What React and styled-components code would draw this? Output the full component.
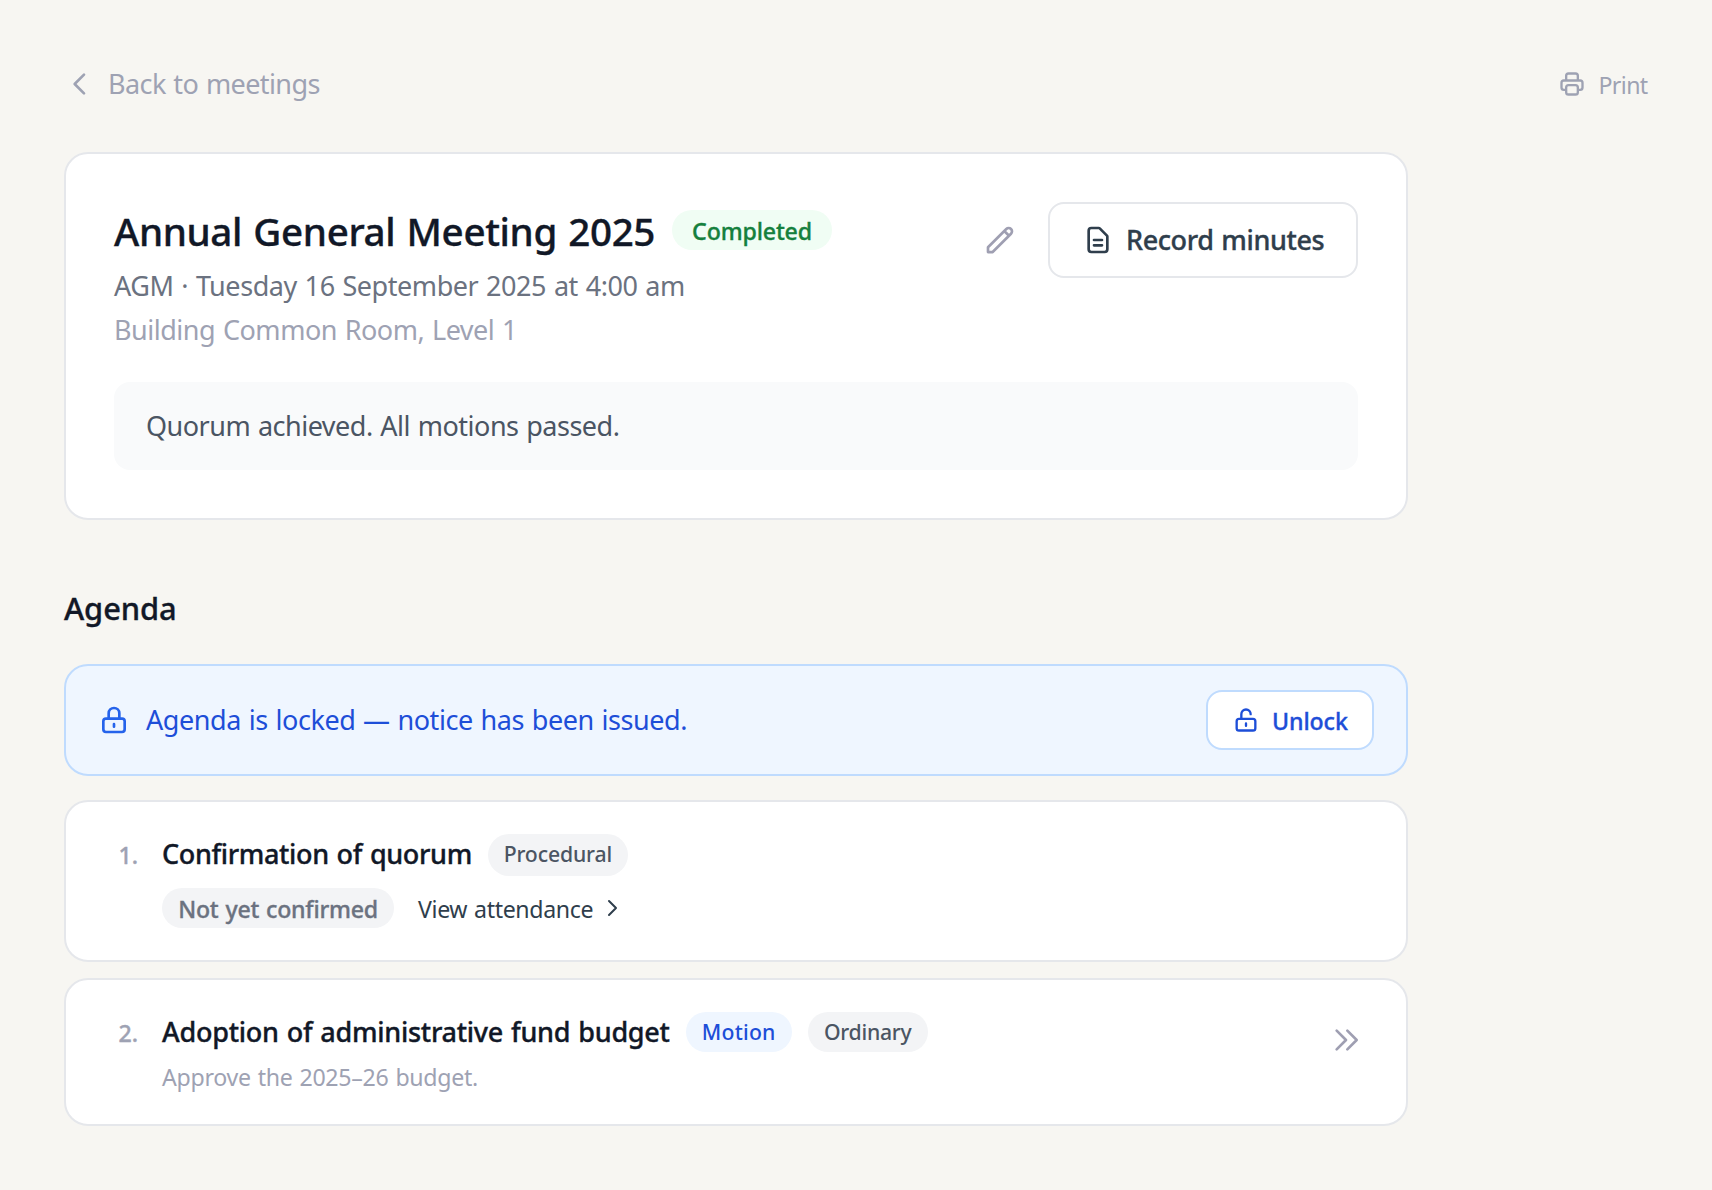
import React from "react";
import styled, { createGlobalStyle, css } from "styled-components";

const GlobalStyle = createGlobalStyle`
  *,
  *::before,
  *::after {
    box-sizing: border-box;
  }

  body {
    margin: 0;
    background: #f7f6f2;
    color: #111827;
    font-family: "Noto Sans", "Open Sans", sans-serif;
    font-size: 27px;
    line-height: 40px;
    word-spacing: 1.2px;
  }

  button {
    font: inherit;
    word-spacing: inherit;
    cursor: pointer;
  }

  h1,
  h2,
  h3,
  p {
    margin: 0;
  }
`;

// medium weight with a hairline stroke, sits between 500 and 600
const semibold = css`
  font-weight: 500;
  -webkit-text-stroke: 0.35px currentColor;
`;

const Page = styled.main`
  min-height: 1190px;
  padding: 64px;
`;

const TopBar = styled.header`
  display: flex;
  align-items: center;
  justify-content: space-between;
  height: 40px;
  margin-bottom: 48px;
`;

const Icon = styled.svg`
  flex: none;
  width: ${(props) => props.$size}px;
  height: ${(props) => props.$size}px;
  fill: none;
  stroke: currentColor;
  stroke-width: 2;
  stroke-linecap: round;
  stroke-linejoin: round;
`;

const BackLink = styled.a`
  display: flex;
  align-items: center;
  gap: 12px;
  color: #9ea2b3;
  letter-spacing: -0.59px;
  white-space: nowrap;
`;

const PrintButton = styled.button`
  display: flex;
  align-items: center;
  gap: 12px;
  padding: 0;
  border: 0;
  background: none;
  color: #9ea2b3;
`;

const Small = styled.span`
  padding-top: 2px;
  font-size: 23.16px;
  line-height: 30px;
  letter-spacing: ${(props) => props.$track || 0}px;
  white-space: nowrap;
  ${(props) => props.$bold && semibold}
`;

const PrintLabel = styled(Small)`
  width: 50px;
`;

const Content = styled.div`
  width: 1344px;
`;

const Card = styled.section`
  border: 2px solid #e5e7eb;
  border-radius: 24px;
  background: #fff;
`;

const MeetingCard = styled(Card)`
  padding: 48px;
`;

const MeetingHeader = styled.div`
  display: flex;
  align-items: flex-start;
  justify-content: space-between;
`;

const TitleRow = styled.div`
  display: flex;
  align-items: center;
  gap: 17px;
`;

const Title = styled.h1`
  padding-top: 2px;
  font-size: 38.6px;
  line-height: 54px;
  letter-spacing: -0.37px;
  word-spacing: 1.6px;
  ${semibold}
`;

const MeetingDate = styled.p`
  margin-top: 8px;
  color: #6b7280;
  letter-spacing: -0.44px;
`;

const Location = styled.p`
  margin-top: 4px;
  color: #9ea2b3;
  letter-spacing: -0.48px;
`;

const Actions = styled.div`
  display: flex;
  align-items: center;
  gap: 16px;
`;

const IconButton = styled.button`
  display: flex;
  padding: ${(props) => props.$pad}px;
  border: 0;
  background: none;
  color: #9f9fb2;
`;

const RecordButton = styled.button`
  display: flex;
  align-items: center;
  gap: 12px;
  width: 310px;
  height: 76px;
  padding: 0 32px;
  border: 2px solid #e5e7eb;
  border-radius: 16px;
  background: #fff;
  color: #2f3e4c;
  letter-spacing: -0.4px;
  white-space: nowrap;
`;

const RecordLabel = styled.span`
  ${semibold}
`;

const Notes = styled.p`
  margin-top: 32px;
  padding: 24px 32px;
  border-radius: 16px;
  background: #f9fafb;
  color: #4b5563;
  letter-spacing: -0.5px;
`;

const pillTones = {
  green: ["#f0fdf4", "#15803d"],
  blue: ["#eff6ff", "#1d4ed8"],
  gray: ["#f3f4f6", "#4b5563"],
  muted: ["#f3f4f6", "#6b7280"]
};

const Pill = styled.span`
  display: flex;
  justify-content: center;
  width: ${(props) => props.$width}px;
  height: ${(props) => props.$height || 40}px;
  padding: 4px 0;
  border-radius: 21px;
  background: ${(props) => pillTones[props.$tone][0]};
  color: ${(props) => pillTones[props.$tone][1]};
`;

const Tag = styled.span`
  font-size: 21.23px;
  font-weight: 500;
  line-height: 32px;
  letter-spacing: ${(props) => props.$track}px;
  white-space: nowrap;
`;

const SectionTitle = styled.h2`
  margin: 64px 0 32px;
  font-size: 30.88px;
  line-height: 48px;
  letter-spacing: -0.12px;
  ${semibold}
`;

const LockBanner = styled.div`
  display: flex;
  align-items: center;
  gap: 16px;
  margin-bottom: 24px;
  padding: 24px 32px;
  border: 2px solid #bfdbfe;
  border-radius: 24px;
  background: #eff6ff;
  color: #2563eb;
`;

const BannerText = styled.p`
  flex: 1;
  color: #1d4ed8;
  letter-spacing: -0.44px;
`;

const UnlockButton = styled.button`
  display: flex;
  align-items: center;
  gap: 12px;
  width: 168px;
  height: 60px;
  padding: 0 24px;
  border: 2px solid #bfdbfe;
  border-radius: 16px;
  background: #fff;
  color: #1d4ed8;
`;

const AgendaList = styled.div`
  display: grid;
  gap: 16px;
`;

const AgendaItem = styled(Card)`
  display: grid;
  grid-template-columns: 40px 1fr auto;
  column-gap: 24px;
  align-items: start;
  padding: 32px;
`;

const ItemNumber = styled.span`
  padding-top: 6px;
  color: #9ea2b3;
  font-size: 23.16px;
  line-height: 30px;
  text-align: right;
  ${semibold}
`;

const ItemHeading = styled.div`
  display: flex;
  align-items: flex-start;
  gap: 16px;
`;

const ItemTitle = styled.h3`
  font-size: 27px;
  letter-spacing: ${(props) => props.$track}px;
  white-space: nowrap;
  ${semibold}
`;

const QuorumRow = styled.div`
  display: flex;
  align-items: center;
  gap: 24px;
  margin-top: 12px;
`;

const AttendanceLink = styled.a`
  display: flex;
  align-items: center;
  gap: 7px;
  color: #2f3e4c;
`;

const Description = styled.p`
  margin-top: 8px;
  padding-top: 2px;
  color: #9ea2b3;
  font-size: 23.16px;
  line-height: 30px;
  letter-spacing: -0.29px;
`;

const icons = {
  back: "M15 19l-7-7 7-7",
  next: "M9 5l7 7-7 7",
  skip: "M13 5l7 7-7 7M5 5l7 7-7 7",
  print:
    "M17 17h2a2 2 0 002-2v-4a2 2 0 00-2-2H5a2 2 0 00-2 2v4a2 2 0 002 2h2m2 4h6a2 2 0 002-2v-4a2 2 0 00-2-2H9a2 2 0 00-2 2v4a2 2 0 002 2zm8-12V5a2 2 0 00-2-2H9a2 2 0 00-2 2v4h10z",
  edit:
    "M15.232 5.232l3.536 3.536m-2.036-5.036a2.5 2.5 0 113.536 3.536L6.5 21.036H3v-3.572L16.732 3.732z",
  document:
    "M9 12h6m-6 4h6m2 5H7a2 2 0 01-2-2V5a2 2 0 012-2h5.586a1 1 0 01.707.293l5.414 5.414a1 1 0 01.293.707V19a2 2 0 01-2 2z",
  lock:
    "M12 15v2m-6 4h12a2 2 0 002-2v-6a2 2 0 00-2-2H6a2 2 0 00-2 2v6a2 2 0 002 2zm10-10V7a4 4 0 00-8 0v4h8z",
  unlock:
    "M8 11V7a4 4 0 018 0m-4 8v2m-6 4h12a2 2 0 002-2v-6a2 2 0 00-2-2H6a2 2 0 00-2 2v6a2 2 0 002 2z"
};

const Glyph = ({ name, size = 32 }) => (
  <Icon $size={size} viewBox="0 0 24 24" aria-hidden="true">
    <path d={icons[name]} />
  </Icon>
);

const App = () => {
  return (
    <Page>
      <GlobalStyle />
      <TopBar>
        <BackLink>
          <Glyph name="back" />
          Back to meetings
        </BackLink>
        <PrintButton>
          <Glyph name="print" size={28} />
          <PrintLabel $track={-0.6}>Print</PrintLabel>
        </PrintButton>
      </TopBar>

      <Content>
        <MeetingCard>
          <MeetingHeader>
            <div>
              <TitleRow>
                <Title>Annual General Meeting 2025</Title>
                <Pill $tone="green" $width={160}>
                  <Small $bold $track={-0.15}>
                    Completed
                  </Small>
                </Pill>
              </TitleRow>
              <MeetingDate>AGM · Tuesday 16 September 2025 at 4:00 am</MeetingDate>
              <Location>Building Common Room, Level 1</Location>
            </div>
            <Actions>
              <IconButton $pad={16} aria-label="Edit meeting">
                <Glyph name="edit" />
              </IconButton>
              <RecordButton>
                <Glyph name="document" />
                <RecordLabel>Record minutes</RecordLabel>
              </RecordButton>
            </Actions>
          </MeetingHeader>
          <Notes>Quorum achieved. All motions passed.</Notes>
        </MeetingCard>

        <SectionTitle>Agenda</SectionTitle>

        <LockBanner>
          <Glyph name="lock" />
          <BannerText>Agenda is locked — notice has been issued.</BannerText>
          <UnlockButton>
            <Glyph name="unlock" size={28} />
            <Small $bold $track={-0.1}>
              Unlock
            </Small>
          </UnlockButton>
        </LockBanner>

        <AgendaList>
          <AgendaItem>
            <ItemNumber>1.</ItemNumber>
            <div>
              <ItemHeading>
                <ItemTitle $track={-0.355}>Confirmation of quorum</ItemTitle>
                <Pill $tone="gray" $width={140} $height={42}>
                  <Tag $track={-0.16}>Procedural</Tag>
                </Pill>
              </ItemHeading>
              <QuorumRow>
                <Pill $tone="muted" $width={232}>
                  <Small $bold $track={-0.24}>
                    Not yet confirmed
                  </Small>
                </Pill>
                <AttendanceLink>
                  <Small $track={-0.37}>View attendance</Small>
                  <Glyph name="next" size={24} />
                </AttendanceLink>
              </QuorumRow>
            </div>
          </AgendaItem>

          <AgendaItem>
            <ItemNumber>2.</ItemNumber>
            <div>
              <ItemHeading>
                <ItemTitle $track={-0.255}>Adoption of administrative fund budget</ItemTitle>
                <Pill $tone="blue" $width={106}>
                  <Tag $track={0.2}>Motion</Tag>
                </Pill>
                <Pill $tone="gray" $width={120}>
                  <Tag $track={-0.28}>Ordinary</Tag>
                </Pill>
              </ItemHeading>
              <Description>Approve the 2025–26 budget.</Description>
            </div>
            <IconButton $pad={12} aria-label="Skip to item">
              <Glyph name="skip" />
            </IconButton>
          </AgendaItem>
        </AgendaList>
      </Content>
    </Page>
  );
};

export default App;
